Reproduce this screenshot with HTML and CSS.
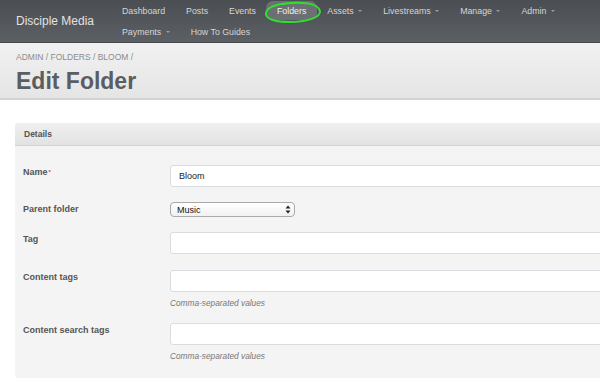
FILE: index.html
```html
<!DOCTYPE html>
<html lang="en">
<head>
    <meta charset="UTF-8">
    <meta name="viewport" content="width=device-width, initial-scale=1.0">
    <title>Edit Folder</title>
    <link rel="stylesheet" href="styles.css">
</head>
<body>
    <!-- Top navigation -->
    <div class="navbar">
        <div class="brand">Disciple Media</div>
        <ul class="nav">
            <li>Dashboard</li>
            <li>Posts</li>
            <li>Events</li>
            <li class="active">Folders</li>
            <li>Assets<span class="caret"></span></li>
            <li>Livestreams<span class="caret"></span></li>
            <li>Manage<span class="caret"></span></li>
            <li>Admin<span class="caret"></span></li>
            <li>Payments<span class="caret"></span></li>
            <li>How To Guides</li>
        </ul>
        <!-- hand-drawn highlight round "Folders" -->
        <svg class="scribble" width="600" height="43" viewBox="0 0 600 43">
            <path d="M283 4 C300 1, 318 3, 320 11 C321 18, 305 22, 290 22 C275 22, 265 19, 266 13 C267 7, 275 4, 291 3" fill="none" stroke="#2fe02f" stroke-width="2" stroke-linecap="round"/>
        </svg>
    </div>

    <!-- Page header -->
    <div class="page-header">
        <div class="breadcrumb">Admin / Folders / Bloom /</div>
        <h1>Edit Folder</h1>
    </div>

    <div class="content">
        <div class="panel">
            <div class="panel-heading">Details</div>
            <div class="panel-body">
                <div class="form-group compact">
                    <label>Name<span class="required">*</span></label>
                    <div><input type="text" class="form-control" value="Bloom"></div>
                </div>
                <div class="form-group compact">
                    <label>Parent folder</label>
                    <div class="select-wrap">
                        <select class="select"><option>Music</option></select>
                        <svg class="select-arrows" width="6" height="9" viewBox="0 0 6 9">
                            <path d="M3 0.5 L5.5 3.5 H0.5 Z M3 8.5 L5.5 5.5 H0.5 Z" fill="#222"/>
                        </svg>
                    </div>
                </div>
                <div class="form-group">
                    <label>Tag</label>
                    <div><input type="text" class="form-control"></div>
                </div>
                <div class="form-group with-help">
                    <label>Content tags</label>
                    <div>
                        <input type="text" class="form-control">
                        <p class="help">Comma-separated values</p>
                    </div>
                </div>
                <div class="form-group last">
                    <label>Content search tags</label>
                    <div>
                        <input type="text" class="form-control">
                        <p class="help">Comma-separated values</p>
                    </div>
                </div>
            </div>
        </div>
    </div>
</body>
</html>
```

FILE: styles.css
```css
* {
    margin: 0;
    padding: 0;
    box-sizing: border-box;
}

body {
    font-family: "Liberation Sans", Arial, sans-serif;
    background-color: white;
    overflow: hidden;
    width: 600px;
}

/* Navbar */
.navbar {
    position: relative;
    display: flex;
    height: 43px;
    background: linear-gradient(#4a4d51, #5c5f63);
    border-bottom: 1px solid #45484b;
}

.brand {
    width: 111.5px;
    padding-left: 16px;
    font-size: 12px;
    line-height: 42px;
    color: #e2e2e2;
}

.nav {
    list-style: none;
    display: flex;
    flex-wrap: wrap;
    width: 470px;
    align-content: flex-start;
}

.nav li {
    display: flex;
    align-items: center;
    height: 21px;
    padding: 0 10.5px;
    font-size: 8.8px;
    color: #d6d6d6;
    border-radius: 7px;
}

.nav li.active {
    color: #f2f2f2;
    background-color: #6c6f73;
    height: 19px;
    margin: 1px 0;
}

.caret {
    width: 0;
    height: 0;
    margin-left: 4.5px;
    border-top: 2.5px solid #9a9c9f;
    border-left: 2.5px solid transparent;
    border-right: 2.5px solid transparent;
}

.scribble {
    position: absolute;
    top: 0;
    left: 0;
}

/* Page header */
.page-header {
    padding: 8px 16px 3px;
    background: linear-gradient(#f1f1f1, #e5e5e5);
    border-bottom: 2px solid #d3d3d3;
}

.breadcrumb {
    font-size: 8.5px;
    line-height: 12px;
    text-transform: uppercase;
    color: #8c8c8c;
}

.page-header h1 {
    margin-top: 4px;
    font-size: 23px;
    line-height: 28px;
    color: #5a5e62;
}

/* Panel */
.content {
    padding: 23px 0 0 15px;
}

.panel {
    width: 720px;
    border-radius: 3px;
    background-color: #f4f4f4;
}

.panel-heading {
    height: 23px;
    padding-left: 9px;
    font-size: 8.5px;
    font-weight: bold;
    line-height: 22px;
    color: #555;
    background: linear-gradient(#f0f0f0, #e2e2e2);
    border-bottom: 1px solid #d4d4d4;
    border-radius: 3px 3px 0 0;
}

.panel-body {
    padding: 19px 0 16px 8px;
}

.form-group {
    display: grid;
    grid-template-columns: 147px 1fr;
    margin-bottom: 16px;
}

.form-group.compact {
    margin-bottom: 15px;
}

.form-group.with-help {
    margin-bottom: 14px;
}

.form-group.last {
    margin-bottom: 0;
}

.form-group label {
    padding-top: 1px;
    font-size: 9px;
    font-weight: bold;
    line-height: 12px;
    color: #555;
}

.required {
    color: #d33;
    font-size: 6px;
    vertical-align: top;
    margin-left: 1px;
}

.form-control {
    display: block;
    width: 100%;
    height: 22px;
    padding: 0 8px;
    font-family: inherit;
    font-size: 9px;
    color: #222;
    background-color: white;
    border: 1px solid #d9dce0;
    border-radius: 3px;
    outline: none;
}

.select-wrap {
    position: relative;
    width: 125px;
    height: 15px;
}

.select {
    appearance: none;
    -webkit-appearance: none;
    display: block;
    width: 125px;
    height: 15px;
    padding: 0 6px;
    font-family: inherit;
    font-size: 9px;
    color: #111;
    background: linear-gradient(#ffffff, #f1f1f1);
    border: 1px solid #a9a9a9;
    border-radius: 4px;
}

.select-arrows {
    position: absolute;
    top: 3px;
    right: 4px;
}

.help {
    margin-top: 6px;
    font-size: 8.3px;
    font-style: italic;
    line-height: 11px;
    color: #777;
}
```
